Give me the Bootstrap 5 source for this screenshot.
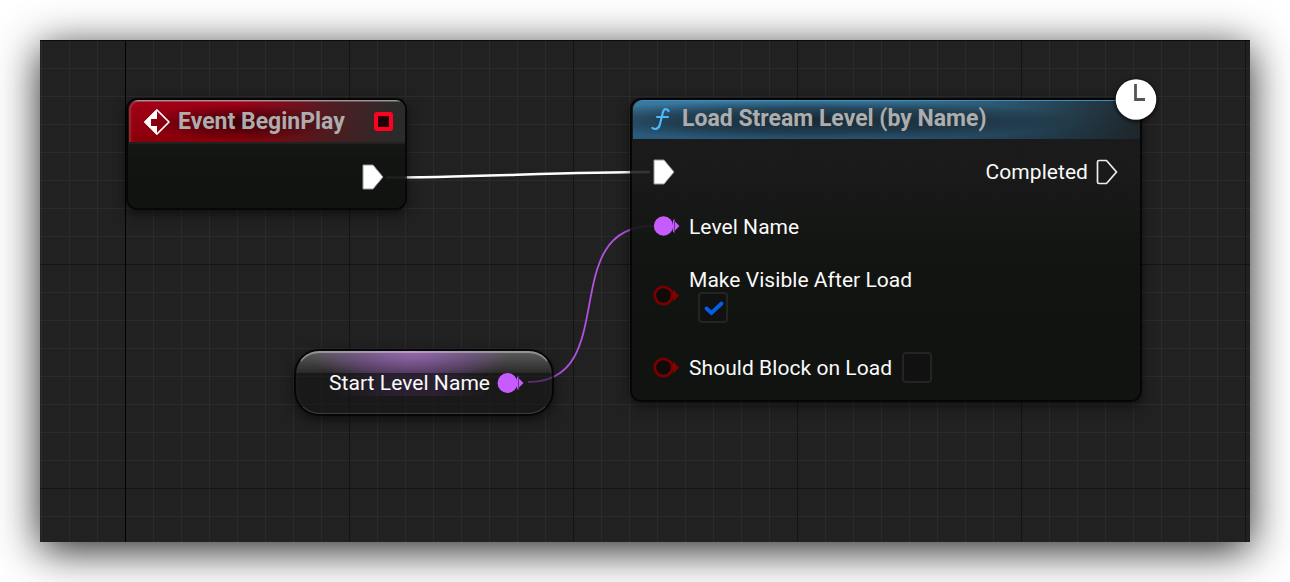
<!DOCTYPE html>
<html lang="en">
<head>
<meta charset="utf-8">
<meta name="viewport" content="width=device-width, initial-scale=1">
<title>Blueprint graph</title>
<link href="https://cdn.jsdelivr.net/npm/bootstrap@5.3.0/dist/css/bootstrap.min.css" rel="stylesheet">
<style>
body{background:#fff;font-family:Roboto,"Liberation Sans",sans-serif;overflow:hidden}
.graph{width:1210px;height:502px;margin:40px;box-shadow:0 8px 40px rgba(0,0,0,.87);
 background:
 linear-gradient(#0b0b0b,#0b0b0b) 0 0/100% 1px no-repeat,
 linear-gradient(90deg,#000 1px,transparent 1px) 85px 0/1300px 100% no-repeat,
 linear-gradient(90deg,#141414 1px,transparent 1px) 85px 0/224px 100%,
 linear-gradient(#141414 1px,transparent 1px) 0 0/100% 224px,
 linear-gradient(90deg,#2b2b2b 1px,transparent 1px) 1px 0/28px 100%,
 linear-gradient(#2b2b2b 1px,transparent 1px) 0 0/100% 28px,#212121}
.wires,.bp-node,.clock-mark{position:absolute}
.wires{left:0;top:0}
.bp-node{border:2px solid rgba(0,0,0,.8);border-radius:11px;background:linear-gradient(rgba(25,26,25,.88),rgba(24,25,24,.88) 25%,rgba(16,19,16,.94) 60%,rgba(16,19,16,.95));background-clip:padding-box;box-shadow:0 4px 12px rgba(0,0,0,.55);color:#fafafa}
.event-node{left:86px;top:58px;width:281px;height:112px;padding-left:1px}
.call-node{left:590px;top:58px;width:512px;height:304px;padding-left:1px}
.bp-title{font-weight:700;font-size:23px;line-height:28px;color:#adadad;white-space:nowrap;border-radius:9px 9px 0 0}
.event-node .bp-title{height:42px;padding:2px 11px 0 14px;background:linear-gradient(#a6a6a6,rgba(120,120,120,.2)) 0 0/100% 2px no-repeat,radial-gradient(ellipse 95px 19px at 40% 54%,rgba(25,0,5,.75),transparent),linear-gradient(90deg,transparent 40%,rgba(42,42,42,.7) 75%,rgba(42,43,42,1) 98%),linear-gradient(#a30018,#890009)}
.event-node .bp-title{box-shadow:inset 2px 1px 2px rgba(255,255,255,.15),0 2px 0 rgba(40,41,41,.6)}
.call-node .bp-title{height:39px;padding:0 18px 2px;background:linear-gradient(#3f8ec0,#3f8ec0) 0 0/100% 1px no-repeat,radial-gradient(ellipse 260px 20px at 36% 52%,rgba(20,26,30,.78) 10%,rgba(20,26,30,.5) 60%,transparent),linear-gradient(90deg,transparent 45%,rgba(25,29,30,.4) 75%,rgba(28,32,33,.9) 100%),linear-gradient(#3a7ba2,#28587a)}
.pin-text{font-size:21px;line-height:24px;letter-spacing:.05px;white-space:nowrap}
.var-node{left:254px;top:309px;width:260px;height:67px;border-radius:25px;padding-left:33px;
 background:linear-gradient(90deg,transparent 15%,rgba(83,45,105,.3) 40%,rgba(83,45,105,.3) 55%,transparent 75%) 0 22px/100% 23px no-repeat,
 radial-gradient(ellipse 100px 38px at 45% 0,rgba(183,112,220,.65),rgba(160,90,200,.35) 60%,transparent) 0 0/100% 22px no-repeat,
 linear-gradient(rgba(120,120,120,.72),rgba(58,58,58,.5)) 0 0/100% 22px no-repeat,rgba(20,20,20,.58);background-clip:padding-box}
.var-node::after{content:"";position:absolute;inset:0;border-radius:23px;border:1px solid transparent;border-top:2px solid rgba(220,220,220,.45);border-bottom:1px solid rgba(150,150,150,.25);box-shadow:inset 0 0 2px rgba(160,160,160,.15)}
.check-slot{width:30px;height:31px;border:2px solid #242424;border-radius:4px;background:#111}
.clock-mark{left:483px;top:-22px;filter:drop-shadow(0 1px 2px #000)}
svg{display:block;flex:none}
</style>
</head>
<body>
<main class="graph position-relative">
 <svg class="wires" width="1210" height="502" fill="none">
  <path d="M346 137.500C430 137.500 525 132 610 132" stroke="#fff" stroke-width="2.500"/>
  <path d="M488 342C583 342 515 186 613 186" stroke="#b052dd" stroke-width="1.800"/>
 </svg>

 <section class="bp-node event-node">
  <header class="bp-title d-flex align-items-center">
   <svg width="28" height="28" viewBox="0 0 28 28"><path d="M14 2 26 14 14 26 2 14Z" fill="none" stroke="#fff" stroke-width="1.700" stroke-linejoin="round"/><path d="M14 1 1 14 14 27V18H8V11H14Z" fill="#fff"/></svg>
   <span style="margin-left:7px">Event BeginPlay</span>
   <svg class="ms-auto" width="19" height="19" style="margin:-2px 1px 0 0"><rect x="2" y="2" width="15" height="15" rx="1" fill="#200006" stroke="#ff0022" stroke-width="4"/></svg>
  </header>
  <div class="d-flex justify-content-end" style="padding:22px 21px 0 0">
   <svg width="22" height="26"><path d="M1 1H11L21 13 11 25H1Z" fill="#fff" stroke="#999" stroke-width="1"/></svg>
  </div>
 </section>

 <section class="bp-node call-node">
  <header class="bp-title d-flex align-items-center">
   <svg width="20" height="24" viewBox="0 0 20 24" fill="none" stroke="#4cb9ff" stroke-width="2.200" stroke-linecap="round"><path d="M17.500 4C16.500 1.500 13 1 12 5L9 17C8 22 4 23 1.500 21"/><path d="M6 10H17" stroke-width="2"/></svg>
   <span style="margin-left:11px">Load Stream Level (by Name)</span>
  </header>
  <div class="d-flex align-items-center pin-text" style="height:66px;padding:0 22px 0 20px">
   <svg width="22" height="26"><path d="M1 1H11L21 13 11 25H1Z" fill="#fff" stroke="#999" stroke-width="1"/></svg>
   <span class="ms-auto">Completed</span>
   <svg width="22" height="26" style="margin-left:8px"><path d="M1.500 3Q1.500 1.500 3 1.500H10.500L20.500 13 10.500 24.500H3Q1.500 24.500 1.500 23Z" fill="none" stroke="#ededed" stroke-width="1.700"/></svg>
  </div>
  <div class="d-flex align-items-center pin-text" style="height:43px;padding-left:20px">
   <svg width="27" height="20" style="margin-top:-1px"><circle cx="10.500" cy="10" r="9.700" fill="#c65cff"/><path d="M20 3.500V16.500L26.500 10Z" fill="#c65cff"/><path d="M21.500 3V17" stroke="#6d338c"/></svg>
   <span style="margin-left:9px">Level Name</span>
  </div>
  <div class="d-flex align-items-start pin-text" style="height:88px;padding:20px 0 0 20px">
   <svg width="27" height="22" style="margin-top:17px"><circle cx="10.500" cy="10.500" r="8.700" fill="#100b09" stroke="#780000" stroke-width="2.800"/><path d="M20 4.500V16.500L26 10.500Z" fill="#870000"/></svg>
   <div style="margin-left:9px"><div>Make Visible After Load</div>
    <div class="check-slot" style="margin:0 0 0 9px"><svg width="26" height="27" viewBox="0 0 26 26"><path d="M6.500 14 11.500 18.500 21.500 9" fill="none" stroke="#0060e6" stroke-width="3.800" stroke-linecap="round"/></svg></div>
   </div>
  </div>
  <div class="d-flex align-items-center pin-text" style="height:62px;padding:1px 0 0 20px">
   <svg width="27" height="22"><circle cx="10.500" cy="10.500" r="8.700" fill="#100b09" stroke="#780000" stroke-width="2.800"/><path d="M20 4.500V16.500L26 10.500Z" fill="#870000"/></svg>
   <span style="margin-left:9px">Should Block on Load</span>
   <div class="check-slot" style="margin-left:10px"></div>
  </div>
  <svg class="clock-mark" width="42" height="42"><circle cx="21" cy="21.500" r="20.300" fill="#fff"/><path d="M20.500 6V21.500H30" fill="none" stroke="#555" stroke-width="2.800"/></svg>
 </section>

 <section class="bp-node var-node d-flex align-items-center pin-text">
  <span>Start Level Name</span>
  <svg width="27" height="20" style="margin-left:7px"><circle cx="10.500" cy="10" r="10" fill="#c65cff"/><path d="M20 3.500V16.500L26.500 10Z" fill="#c65cff"/><path d="M21.500 3V17" stroke="#6d338c"/></svg>
 </section>
</main>
<script src="https://cdn.jsdelivr.net/npm/bootstrap@5.3.0/dist/js/bootstrap.bundle.min.js"></script>
</body>
</html>
